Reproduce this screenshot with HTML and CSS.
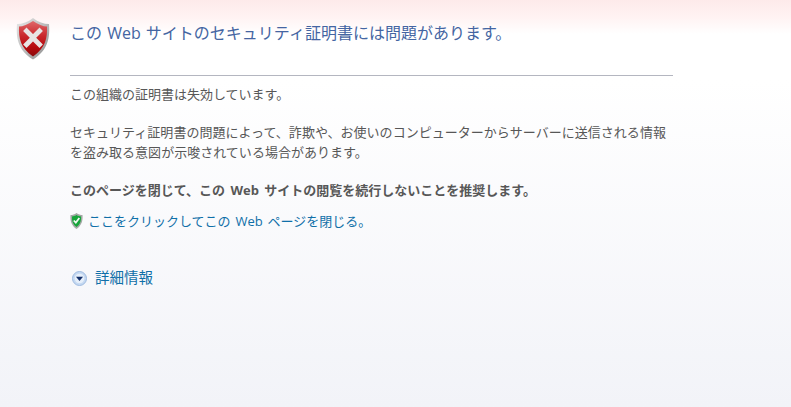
FILE: index.html
```html
<!DOCTYPE html>
<html lang="ja">
<head>
<meta charset="utf-8">
<title>証明書エラー</title>
<link rel="stylesheet" href="styles.css">
</head>
<body>
<div class="page">
  <div class="shield-col">
    <svg class="shield" width="36" height="44" viewBox="0 0 36 44">
      <defs>
        <linearGradient id="rim" x1="0" y1="0" x2="1" y2="1"><stop offset="0" stop-color="#e8e8e8"/><stop offset=".5" stop-color="#bdbdbd"/><stop offset="1" stop-color="#8a8a8a"/></linearGradient>
        <linearGradient id="red" x1="0" y1="0" x2="0" y2="1"><stop offset="0" stop-color="#e0686a"/><stop offset=".42" stop-color="#c9282c"/><stop offset=".75" stop-color="#b50a0e"/><stop offset="1" stop-color="#8a0a0c"/></linearGradient>
      </defs>
      <path d="M18 1 C23 5 29 7 34 7 C35 20 33.500 33 18 42.500 C2.500 33 1 20 2 7 C7 7 13 5 18 1Z" fill="url(#rim)"/>
      <path d="M18 4 C23 7.500 28 9.500 32 9.500 C32.500 21 30.500 31 18 39.500 C5.500 31 3.500 21 4 9.500 C8 9.500 13 7.500 18 4Z" fill="url(#red)"/>
      <path d="M11.500 14 L18 20.500 L24.500 14 M24.500 27.500 L18 21 L11.500 27.500" fill="none" stroke="#e8e4e4" stroke-width="4.800" stroke-linecap="square"/>
    </svg>
  </div>
  <div class="content">
    <h1 class="title">この Web サイトのセキュリティ証明書には問題があります。</h1>
    <hr class="rule">
    <p class="first">この組織の証明書は失効しています。</p>
    <p class="second">セキュリティ証明書の問題によって、詐欺や、お使いのコンピューターからサーバーに送信される情報を盗み取る意図が示唆されている場合があります。</p>
    <p class="advice">このページを閉じて、この Web サイトの閲覧を続行しないことを推奨します。</p>
    <div class="close-row">
      <svg width="13" height="16" viewBox="0 0 13 16">
        <path d="M6.500 0 C8.500 1.500 10.500 2 12.500 2 C13 8 11.500 12.500 6.500 16 C1.500 12.500 0 8 .5 2 C2.500 2 4.500 1.500 6.500 0Z" fill="#a3a8a5"/>
        <path d="M6.500 2 C8.200 3 9.600 3.400 11 3.500 C11.300 8 10.100 11.500 6.500 14 C2.900 11.500 1.700 8 2 3.500 C3.400 3.400 4.800 3 6.500 2Z" fill="#16a53a"/>
        <path d="M3.800 7.500 L5.800 9.700 L9.300 5" fill="none" stroke="#f2faf2" stroke-width="1.800"/>
      </svg>
      <a class="link" href="#">ここをクリックしてこの Web ページを閉じる。</a>
    </div>
    <div class="more-row">
      <svg width="15" height="15" viewBox="0 0 15 15">
        <circle cx="7.500" cy="7.500" r="7" fill="#c5d9f2" stroke="#9fbbe0"/>
        <circle cx="7.500" cy="7.500" r="4.800" fill="#e6effa"/>
        <path d="M4 5.800 H11 L7.500 10Z" fill="#14306a"/>
      </svg>
      <a class="link more" href="#">詳細情報</a>
    </div>
  </div>
</div>
</body>
</html>
```
FILE: styles.css
```css
* { box-sizing: border-box; }
html, body { margin: 0; height: 100%; }
body {
  overflow: hidden;
  font-family: "Open Sans", "Noto Sans CJK JP", "Liberation Sans", sans-serif;
  font-size: 13px;
  color: #575757;
  word-spacing: 1px;
  background: linear-gradient(#fdeaea 0, #fff2f2 16px, #fff 34px, #fff 80px, #f2f3f8 407px);
}
.page { display: flex; padding: 17px 0 0 15px; }
.shield-col { width: 55px; flex: none; }
.shield { display: block; }
.content { width: 603px; flex: none; }
.title { margin: 4px 0 0; font-size: 16px; line-height: 24px; font-weight: 400; color: #4465a2; word-spacing: 1px; }
.rule { margin: 30px 0 0; border: 0; height: 1px; background: #b4b6c0; }
p { margin: 0; line-height: 20px; }
.first { margin-top: 8px; }
.second { margin-top: 18px; letter-spacing: .02px; }
.advice { margin-top: 18px; font-weight: 700; word-spacing: 2px; }
.close-row { display: flex; align-items: center; gap: 5px; margin-top: 11px; }
.more-row { display: flex; align-items: center; gap: 8px; margin-top: 37px; padding-left: 2px; }
.link { color: #0f6fa8; text-decoration: none; line-height: 20px; word-spacing: 1.500px; }
.more { font-size: 14.500px; }
```
